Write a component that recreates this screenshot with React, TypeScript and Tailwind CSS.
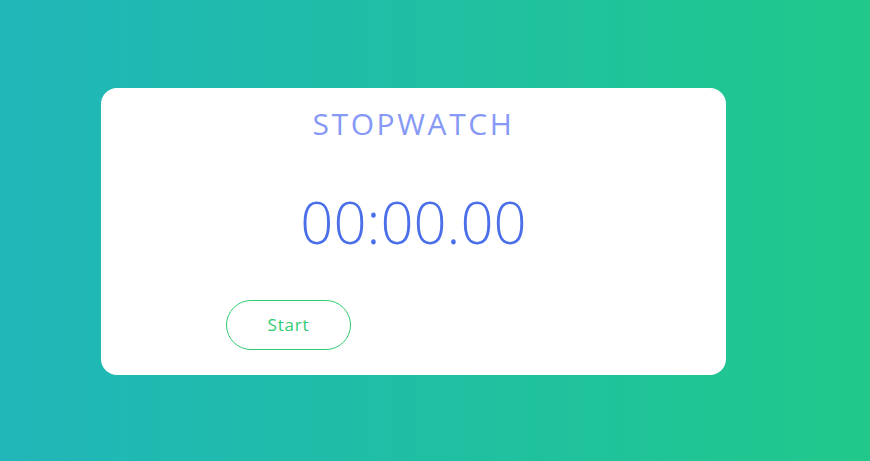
export default function App() {
  return (
    <div
      className="flex h-[461px] w-full items-start bg-gradient-to-r from-[#21b6b9] to-[#21c88a] pl-[101px] pt-[88px]"
      style={{ fontFamily: '"Open Sans", "Noto Sans", sans-serif' }}
    >
      <div className="flex h-[287px] w-[625px] flex-col items-center rounded-2xl bg-white">
        <h1 className="pt-[12px] text-[30px] font-normal leading-[48px] tracking-[2.6px] text-[#8799f6]">
          STOPWATCH
        </h1>
        <div className="mt-[42px] text-[58px] font-light leading-[64px] text-[#4a6fe9]">
          00:00.00
        </div>
        <div className="mt-[46px] flex w-full pl-[125px]">
          <button className="h-[50px] w-[125px] rounded-full border border-[#2ecc71] text-[17px] font-medium tracking-[0.8px] text-[#2ecc71]">
            Start
          </button>
        </div>
      </div>
    </div>
  );
}
